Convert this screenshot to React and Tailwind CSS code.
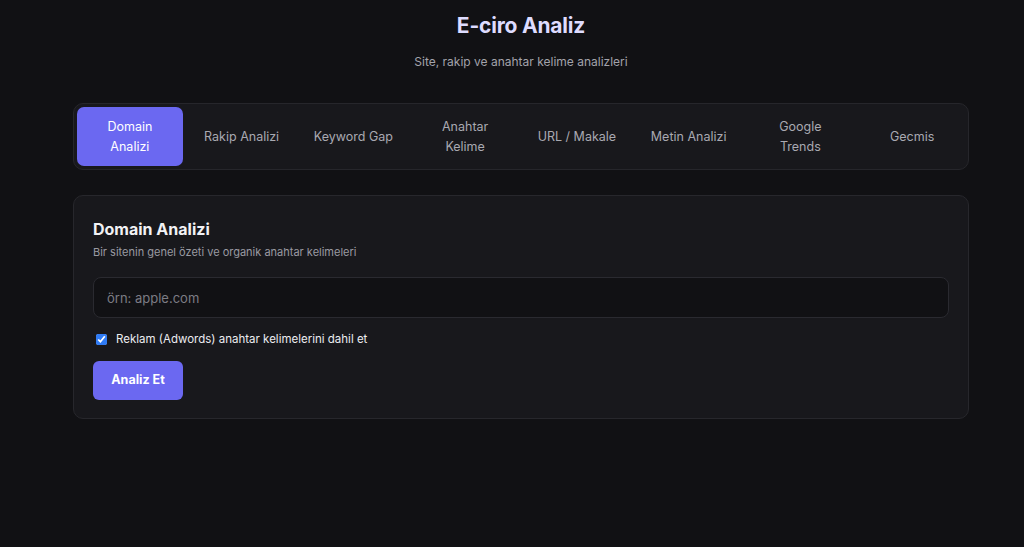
export default function App() {
  const tabs = [["Domain", "Analizi"], ["Rakip Analizi"], ["Keyword Gap"], ["Anahtar", "Kelime"], ["URL / Makale"], ["Metin Analizi"], ["Google", "Trends"], ["Gecmis"]];
  return (
    <div className="min-h-[547px] w-full bg-[#111114] text-white" style={{ fontFamily: 'Inter, "Noto Sans", sans-serif' }}>
      <div className="ml-[73px] w-[896px] pt-[13px]">
        <h1 className="text-center text-[21px] font-bold leading-[26px] text-[#dedcff] tracking-[-0.2px]">E-ciro Analiz</h1>
        <p className="mt-[15px] text-center text-[12px] leading-[16px] text-[#a3a3ab]">Site, rakip ve anahtar kelime analizleri</p>
        <div className="mt-[33px] grid grid-cols-8 gap-[6px] rounded-[10px] border border-[#26262b] bg-[#18181c] p-[3px]">
          {tabs.map((t, i) => (
            <button
              key={t.join(" ")}
              className={
                i === 0
                  ? "flex h-[59px] flex-col items-center justify-center whitespace-nowrap rounded-[7px] bg-[#6b68f1] text-center text-[12.5px] leading-[20px] text-white"
                  : "flex h-[59px] flex-col items-center justify-center whitespace-nowrap rounded-[7px] text-center text-[12.5px] leading-[20px] text-[#a9a9b1]"
              }
            >
              {t.map((line) => (
                <span key={line}>{line}</span>
              ))}
            </button>
          ))}
        </div>
        <div className="mt-[25px] rounded-[10px] border border-[#27272c] bg-[#18181c] px-[19px] pb-[18px] pt-[21px]">
          <h2 className="text-[16px] font-bold leading-[24px] text-[#f2f2f5]">Domain Analizi</h2>
          <p className="mt-[3px] text-[11px] leading-[16px] text-[#9a9aa2]">Bir sitenin genel özeti ve organik anahtar kelimeleri</p>
          <input
            placeholder="örn: apple.com"
            className="mt-[17px] block h-[41px] w-full rounded-[8px] border border-[#2a2a30] bg-[#111114] px-[13px] text-[13px] text-white placeholder:text-[#7c7c84] outline-none"
          />
          <label className="mt-[13px] flex items-center gap-[9px] pl-[3px]">
            <input type="checkbox" defaultChecked className="h-[11px] w-[11px] accent-[#2f7bf5]" />
            <span className="text-[11.5px] leading-[16px] text-[#ececf0]">Reklam (Adwords) anahtar kelimelerini dahil et</span>
          </label>
          <button className="mt-[14px] h-[39px] w-[90px] rounded-[6px] bg-[#6b68f1] text-[12.5px] font-bold text-white">Analiz Et</button>
        </div>
      </div>
    </div>
  );
}
